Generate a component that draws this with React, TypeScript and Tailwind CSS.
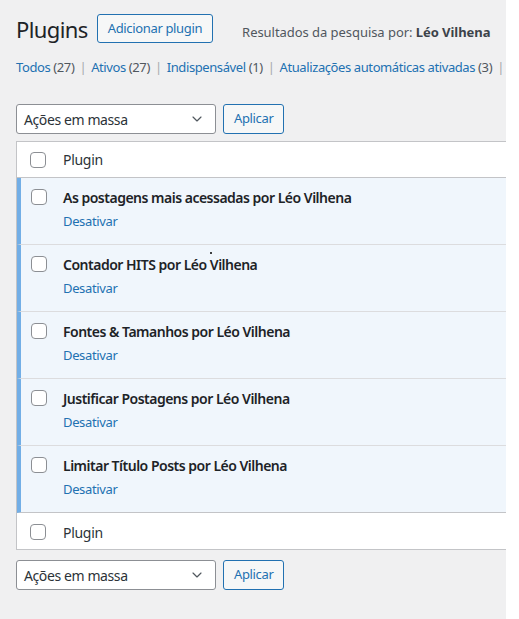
import { ChevronDown } from 'lucide-react'

const plugins = [
  'As postagens mais acessadas por Léo Vilhena',
  'Contador HITS por Léo Vilhena',
  'Fontes & Tamanhos por Léo Vilhena',
  'Justificar Postagens por Léo Vilhena',
  'Limitar Título Posts por Léo Vilhena',
]

const filters = [
  { label: 'Todos', count: 27 },
  { label: 'Ativos', count: 27 },
  { label: 'Indispensável', count: 1 },
  { label: 'Atualizações automáticas ativadas', count: 3 },
]

function Checkbox() {
  return <span className="block h-4 w-4 shrink-0 rounded-[4px] border border-[#8c8f94] bg-white" />
}

function BulkActions() {
  return (
    <div className="flex items-center gap-[7px]">
      <div className="flex h-[30px] w-[200px] items-center justify-between rounded-[3px] border border-[#8c8f94] bg-white pl-[7px] pr-[10px] text-[14px] tracking-[-0.4px] text-[#2c3338]">
        <span>Ações em massa</span>
        <ChevronDown size={16} strokeWidth={1.75} className="text-[#50575e]" />
      </div>
      <button className="h-[30px] rounded-[3px] border border-[#2271b1] bg-[#f6f7f7] px-[10px] text-[13px] tracking-[-0.35px] text-[#2271b1]">
        Aplicar
      </button>
    </div>
  )
}

export default function App() {
  return (
    <div className="flex min-h-[619px] bg-white" style={{ fontFamily: '"Noto Sans", "Open Sans", sans-serif' }}>
      <div className="relative w-[506px] shrink-0 overflow-hidden bg-[#f0f0f1] pl-4 pt-[14px] pb-8">
        <div className="flex h-[29px] items-center whitespace-nowrap">
          <h1 className="mr-[9px] text-[22px] leading-none tracking-[-0.6px] text-[#1d2327]">Plugins</h1>
          <button className="h-[29px] rounded-[3px] border border-[#2271b1] bg-[#f6f7f7] px-[10px] text-[13px] tracking-[-0.35px] text-[#2271b1]">
            Adicionar plugin
          </button>
          <span className="ml-[29px] mt-[8px] text-[13px] tracking-[-0.05px] text-[#50575e]">
            Resultados da pesquisa por: <strong className="font-bold text-[#3c434a]">Léo Vilhena</strong>
          </span>
        </div>

        <div className="mt-[15px] flex h-5 items-center whitespace-nowrap text-[13px] tracking-[-0.4px]">
          {filters.map((f) => (
            <span key={f.label} className="flex items-center">
              <span className="text-[#2271b1]">{f.label}</span>
              <span className="ml-[3px] text-[#50575e]">({f.count})</span>
              <span className="mx-[5px] text-[#a7aaad]">|</span>
            </span>
          ))}
        </div>

        <div className="mt-[26px]">
          <BulkActions />
        </div>

        <div className="mt-[7px] w-[520px] border border-[#c3c4c7] bg-white">
          <div className="flex h-[36px] items-center border-b border-[#c3c4c7] pl-[13px]">
            <Checkbox />
            <span className="ml-[17px] text-[14px] tracking-[-0.3px] text-[#2c3338]">Plugin</span>
          </div>
          {plugins.map((name, i) => (
            <div
              key={name}
              className={`flex h-[67px] border-l-4 border-[#72aee6] bg-[#f0f6fc] pl-[10px] pt-[11px] ${i < plugins.length - 1 ? 'border-b border-b-[#dcdcde]' : 'border-b border-b-[#c3c4c7]'}`}
            >
              <Checkbox />
              <div className="ml-[16px] -mt-[1px]">
                <div className="text-[14px] font-semibold leading-[20px] tracking-[-0.5px] text-[#1d2327]">{name}</div>
                <div className="mt-[3px] text-[13px] leading-[20px] tracking-[-0.35px] text-[#2271b1]">Desativar</div>
              </div>
            </div>
          ))}
          <div className="flex h-[36px] items-center pl-[13px] pt-[2px]">
            <Checkbox />
            <span className="ml-[17px] text-[14px] tracking-[-0.3px] text-[#2c3338]">Plugin</span>
          </div>
        </div>

        <div className="mt-[10px]">
          <BulkActions />
        </div>

        <span className="absolute left-[210px] top-[252px] h-[2px] w-[2px] rounded-full bg-black" />
      </div>
    </div>
  )
}
